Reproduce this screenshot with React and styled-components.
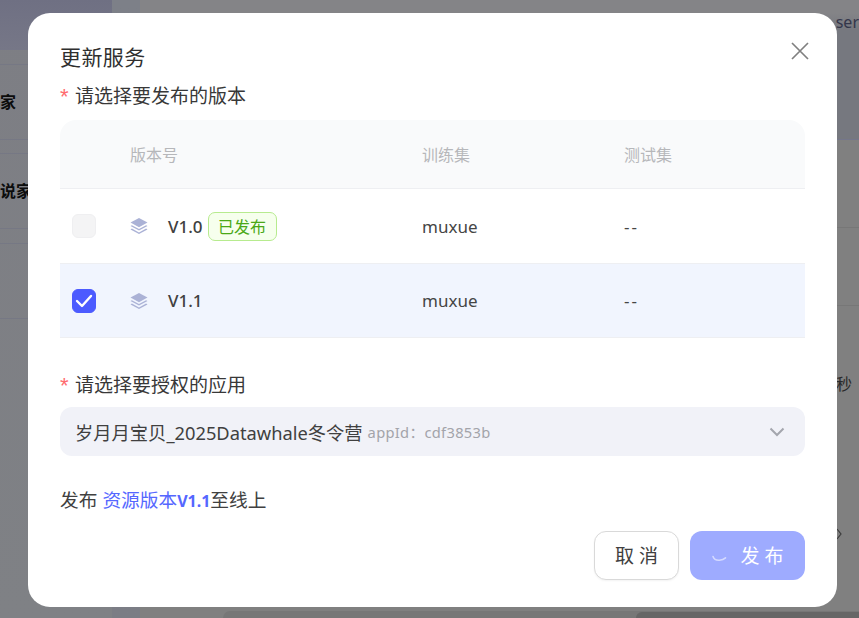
import React from "react";
import styled, { createGlobalStyle } from "styled-components";

const Global = createGlobalStyle`
  html, body { margin: 0; padding: 0; height: 100%; overflow: hidden; }
  body { font-family: "Noto Sans", "Noto Sans CJK SC", sans-serif; }
  * { box-sizing: border-box; }
`;

const Page = styled.div`
  position: relative;
  width: 859px;
  height: 618px;
  overflow: hidden;
  background: #848487;
  display: flex;
`;

const BackSide = styled.aside`
  width: 112px;
  flex: none;
  display: flex;
  flex-direction: column;
  background: linear-gradient(180deg, #7d7e84 0, #7f8185 100%);
`;

const BackBrand = styled.div`
  height: 50px;
  flex: none;
  background: linear-gradient(180deg, #6f7083 0, #767787 100%);
`;

const BackSpacer = styled.div`
  height: ${(p) => p.$h}px;
  flex: none;
  border-bottom: 1px solid #767884;
  background: ${(p) => p.$bg || "transparent"};
`;

const BackItem = styled.div`
  height: 75px;
  flex: none;
  display: flex;
  align-items: center;
  border-bottom: 1px solid #767884;
  font-size: 16px;
  line-height: 20px;
  font-weight: 700;
  color: #0c0c0c;
  white-space: nowrap;
`;

const BackRail = styled.div`
  width: 28px;
  flex: none;
  background: linear-gradient(180deg, #7d8088 0, #7b7d85 100%);
`;

const BackMain = styled.main`
  flex: 1;
  display: flex;
  flex-direction: column;
  background: #808080;
`;

const BackHeader = styled.div`
  height: 140px;
  flex: none;
  display: flex;
  justify-content: flex-end;
  padding: 11px 0 0;
  border-bottom: 1px solid #74768a;
  background: linear-gradient(180deg, #848487 0, #848487 13px, #76787f 30px);
  color: #33364a;
  font-size: 16px;
  line-height: 22px;
`;

const BackBody = styled.div`
  flex: 1;
  display: flex;
  flex-direction: column;
  align-items: flex-end;
  color: #2a2a2a;
  font-size: 16px;
`;

const BackBand = styled.div`
  width: 100%;
  flex: none;
  height: ${(p) => p.$h}px;
  border-bottom: 1px solid #777;
`;

const BackTime = styled.div`
  margin-top: 67px;
  line-height: 22px;
  width: 23px;
  height: 22px;
  white-space: nowrap;
`;

const BackArrow = styled.div`
  margin-top: 133px;
  margin-right: 17px;
  display: flex;
`;

const BackBar = styled.div`
  margin-top: auto;
  width: 636px;
  height: 7px;
  background: #777;
  border-radius: 8px 0 0 0;
  display: flex;
  justify-content: flex-end;
  align-items: flex-end;
`;

const BackBarThumb = styled.div`
  width: 223px;
  height: 6px;
  background: #666;
  border-radius: 6px 0 0 0;
`;

const Modal = styled.section`
  position: absolute;
  left: 28px;
  top: 13px;
  width: 809px;
  height: 594px;
  background: #fff;
  border-radius: 22px;
  padding: 29px 32px 27px;
  display: flex;
  flex-direction: column;
`;

const Close = styled.button`
  position: absolute;
  top: 29px;
  right: 28px;
  width: 18px;
  height: 18px;
  padding: 0;
  border: 0;
  background: none;
  color: #808080;
  display: flex;
`;

const Title = styled.h2`
  margin: 0;
  font-size: 21px;
  line-height: 30px;
  font-weight: 400;
  color: #2f2f2f;
  letter-spacing: 0.4px;
`;

const Label = styled.div`
  display: flex;
  align-items: center;
  gap: 5px;
  height: 28px;
  font-size: 19px;
  color: #383838;
`;

const FirstLabel = styled(Label)`
  margin-top: 9px;
`;

const Star = styled.span`
  color: #ff6b6f;
  font-family: "Liberation Sans", sans-serif;
  font-size: 22px;
  width: 10px;
  margin-top: 4px;
`;

const Table = styled.div`
  margin-top: 11px;
  display: flex;
  flex-direction: column;
`;

const Row = styled.div`
  display: grid;
  grid-template-columns: 70px 292px 202px 1fr;
  align-items: center;
  height: ${(p) => p.$h}px;
  font-size: ${(p) => (p.$head ? 16 : 17)}px;
  background: ${(p) => p.$bg};
  border-bottom: 1px solid #eeeff2;
  border-radius: ${(p) => (p.$head ? "16px 16px 0 0" : "0")};
  color: ${(p) => (p.$head ? "#b6b7ba" : "#454545")};
`;

const CheckCell = styled.div`
  padding-left: 12px;
  display: flex;
`;

const Check = styled.span`
  width: 24px;
  height: 24px;
  border-radius: 6px;
  display: flex;
  align-items: center;
  justify-content: center;
  background: ${(p) => (p.$on ? "#4c5bff" : "#f4f4f5")};
  border: 1px solid ${(p) => (p.$on ? "#4c5bff" : "#efeff1")};
`;

const VersionCell = styled.div`
  display: flex;
  align-items: center;
`;

const VersionName = styled.span`
  margin-left: 20px;
  font-size: 17px;
  font-weight: 500;
  color: #404040;
`;

const Tag = styled.span`
  margin-left: 5px;
  height: 29px;
  padding: 0 9.5px;
  display: flex;
  align-items: center;
  border: 1px solid #b7eb8f;
  background: #f6ffed;
  border-radius: 7px;
  color: #4aa816;
  font-size: 16px;
`;

const Dash = styled.span`
  letter-spacing: 2px;
`;

const SelectLabel = styled(Label)`
  margin-top: 32px;
`;

const Select = styled.div`
  margin-top: 9px;
  height: 49px;
  border-radius: 12px;
  background: #f1f2f8;
  display: flex;
  align-items: center;
  padding: 0 20px 0 15px;
  font-size: 18.3px;
  color: #404040;
`;

const SelectName = styled.span`
  white-space: nowrap;
`;

const SelectId = styled.span`
  margin-left: 5px;
  font-size: 14.7px;
  color: #a3a4aa;
  letter-spacing: 0.3px;
  flex: 1;
`;

const Summary = styled.p`
  margin: 31px 0 0;
  font-size: 18.7px;
  line-height: 26px;
  color: #404040;
`;

const Link = styled.span`
  color: #5567ff;
  margin-left: 5px;
`;

const LinkVersion = styled.b`
  font-weight: 700;
  font-size: 16px;
`;

const Footer = styled.div`
  margin-top: auto;
  display: flex;
  justify-content: flex-end;
  gap: 11px;
`;

const Button = styled.button`
  height: 49px;
  border-radius: 12px;
  font-family: inherit;
  font-size: 19px;
  letter-spacing: 5px;
  display: flex;
  align-items: center;
  justify-content: center;
  padding: 0 0 2px 5px;
`;

const Cancel = styled(Button)`
  width: 85px;
  background: #fff;
  border: 1px solid #d9d9d9;
  color: #404040;
  box-shadow: 0 1px 2px rgba(0, 0, 0, 0.05);
`;

const Submit = styled(Button)`
  width: 115px;
  background: #9eabff;
  border: 0;
  color: #fff;
  gap: 13px;
`;

const Layers = () => (
  <svg width="18" height="18" viewBox="0 0 18 18" fill="#abb2d6">
    <path d="M9 1 17.5 5.6 9 10.2.5 5.6Z" />
    <path d="M1.9 8.2 9 12 16.1 8.2 17.5 9 9 13.6.5 9Z" />
    <path d="M1.9 11.6 9 15.4 16.1 11.6 17.5 12.4 9 17 .5 12.4Z" />
  </svg>
);

const Tick = () => (
  <svg width="18" height="14" viewBox="0 0 18 14" fill="none" stroke="#fff" strokeWidth="2.4" strokeLinecap="round" strokeLinejoin="round">
    <path d="M2 7 7 12 16 2" />
  </svg>
);

const Spinner = () => (
  <svg width="16" height="16" viewBox="0 0 16 16" fill="none" stroke="#d5daff" strokeWidth="1.6" strokeLinecap="round">
    <path d="M2 9.5C3 12.5 6 13.4 8.5 13.2 11 13 13 12.2 14.5 10.8" />
  </svg>
);

const rows = [
  { name: "V1.0", published: true, on: false, bg: "#fff" },
  { name: "V1.1", published: false, on: true, bg: "#f1f5fe" },
];

export default function App() {
  return (
    <Page>
      <Global />
      <BackSide>
        <BackBrand />
        <BackSpacer $h={15} />
        <BackItem>家</BackItem>
        <BackSpacer $h={14} />
        <BackItem>说家</BackItem>
        <BackSpacer $h={15} />
        <BackSpacer $h={75} />
      </BackSide>
      <BackRail />
      <BackMain>
        <BackHeader>ser</BackHeader>
        <BackBody>
          <BackBand $h={88} />
          <BackBand $h={78} />
          <BackTime>秒</BackTime>
          <BackArrow>
            <svg width="6" height="12" viewBox="0 0 6 12" fill="none" stroke="#3a3a3a" strokeWidth="1.2">
              <path d="M1 1 5 6 1 11" />
            </svg>
          </BackArrow>
          <BackBar>
            <BackBarThumb />
          </BackBar>
        </BackBody>
      </BackMain>
      <Modal>
        <Close aria-label="关闭">
          <svg width="18" height="18" viewBox="0 0 18 18" fill="none" stroke="currentColor" strokeWidth="1.7">
            <path d="M1 1 17 17M17 1 1 17" />
          </svg>
        </Close>
        <Title>更新服务</Title>
        <FirstLabel>
          <Star>*</Star>请选择要发布的版本
        </FirstLabel>
        <Table>
          <Row $head $h={69} $bg="#f9fafb">
            <span />
            <span>版本号</span>
            <span>训练集</span>
            <span>测试集</span>
          </Row>
          {rows.map((r) => (
            <Row key={r.name} $h={r.on ? 74 : 75} $bg={r.bg}>
              <CheckCell>
                <Check $on={r.on}>{r.on && <Tick />}</Check>
              </CheckCell>
              <VersionCell>
                <Layers />
                <VersionName>{r.name}</VersionName>
                {r.published && <Tag>已发布</Tag>}
              </VersionCell>
              <span>muxue</span>
              <Dash>--</Dash>
            </Row>
          ))}
        </Table>
        <SelectLabel>
          <Star>*</Star>请选择要授权的应用
        </SelectLabel>
        <Select>
          <SelectName>岁月月宝贝_2025Datawhale冬令营</SelectName>
          <SelectId>appId：cdf3853b</SelectId>
          <svg width="16" height="10" viewBox="0 0 16 10" fill="none" stroke="#a4a6ae" strokeWidth="2">
            <path d="M1.5 1.5 8 8l6.5-6.5" />
          </svg>
        </Select>
        <Summary>
          发布
          <Link>
            资源版本<LinkVersion>V1.1</LinkVersion>
          </Link>
          至线上
        </Summary>
        <Footer>
          <Cancel>取消</Cancel>
          <Submit>
            <Spinner />
            发布
          </Submit>
        </Footer>
      </Modal>
    </Page>
  );
}
